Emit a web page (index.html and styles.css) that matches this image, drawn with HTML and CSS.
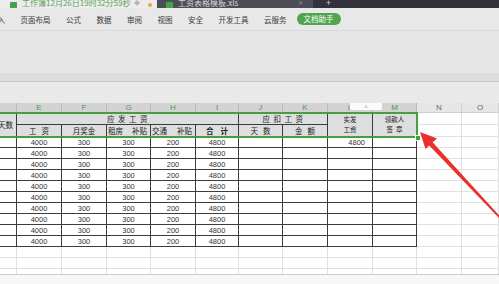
FILE: index.html
```html
<!DOCTYPE html>
<html>
<head>
  <title>工资表</title>
  <link rel="stylesheet" href="styles.css">
</head>
<body>

  <div class="tabbar">
    <div class="tab tab-active">
      <span class="doc-icon"></span>
      <span class="tab-title">工作簿12月26日19时32分59秒</span>
      <span class="tab-pin">◆</span>
      <span class="tab-dot"></span>
    </div>
    <div class="tab tab-dark">
      <span class="doc-icon"></span>
      <span class="tab-title tab-title-light">工资表格模板.xls</span>
      <span class="tab-close">✕</span>
    </div>
    <div class="tab-rest"><span class="tab-plus">+</span></div>
  </div>

  <div class="menu">
    <span class="menu-item menu-first">入</span>
    <span class="menu-item">页面布局</span>
    <span class="menu-item">公式</span>
    <span class="menu-item">数据</span>
    <span class="menu-item">审阅</span>
    <span class="menu-item">视图</span>
    <span class="menu-item">安全</span>
    <span class="menu-item">开发工具</span>
    <span class="menu-item">云服务</span>
    <span class="menu-pill">文档助手</span>
  </div>

  <div class="ribbon"></div>
  <div class="ribbon-band"></div>
  <div class="formula-area"></div>

  <div class="sheet">
    <div class="colhead">
      <div class="ch ch-sel"></div>
      <div class="ch ch-sel">E</div>
      <div class="ch ch-sel">F</div>
      <div class="ch ch-sel">G</div>
      <div class="ch ch-sel">H</div>
      <div class="ch ch-sel">I</div>
      <div class="ch ch-sel">J</div>
      <div class="ch ch-sel">K</div>
      <div class="ch ch-sel">L</div>
      <div class="ch ch-sel">M</div>
      <div class="ch">N</div>
      <div class="ch">O</div>
      <div class="collapse-btn">^</div>
    </div>

    <div class="grid">
      <!-- header row 1 -->
      <div class="c hd rows2 right">天数</div>
      <div class="c hd span5 spaced">应发工资</div>
      <div class="c hd span2 spaced">应扣工资</div>
      <div class="c hd rows2 two-line"><span>实发</span><span>工资</span></div>
      <div class="c hd rows2 two-line"><span>领款人</span><span>签&nbsp;&nbsp;章</span></div>
      <div class="c lt"></div>
      <div class="c lt"></div>
      <!-- header row 2 -->
      <div class="c hd">工&nbsp;&nbsp;&nbsp;资</div>
      <div class="c hd">月奖金</div>
      <div class="c hd split"><span>租房</span><span>补贴</span></div>
      <div class="c hd split"><span>交通</span><span>补贴</span></div>
      <div class="c hd bold">合&nbsp;&nbsp;&nbsp;&nbsp;计</div>
      <div class="c hd">天&nbsp;&nbsp;&nbsp;数</div>
      <div class="c hd">金&nbsp;&nbsp;&nbsp;额</div>
      <div class="c lt"></div>
      <div class="c lt"></div>

      <!-- data rows -->
      <div class="c"></div><div class="c">4000</div><div class="c">300</div><div class="c">300</div><div class="c">200</div><div class="c">4800</div><div class="c"></div><div class="c"></div><div class="c num-right">4800</div><div class="c"></div><div class="c lt"></div><div class="c lt"></div>
      <div class="c"></div><div class="c">4000</div><div class="c">300</div><div class="c">300</div><div class="c">200</div><div class="c">4800</div><div class="c"></div><div class="c"></div><div class="c"></div><div class="c"></div><div class="c lt"></div><div class="c lt"></div>
      <div class="c"></div><div class="c">4000</div><div class="c">300</div><div class="c">300</div><div class="c">200</div><div class="c">4800</div><div class="c"></div><div class="c"></div><div class="c"></div><div class="c"></div><div class="c lt"></div><div class="c lt"></div>
      <div class="c"></div><div class="c">4000</div><div class="c">300</div><div class="c">300</div><div class="c">200</div><div class="c">4800</div><div class="c"></div><div class="c"></div><div class="c"></div><div class="c"></div><div class="c lt"></div><div class="c lt"></div>
      <div class="c"></div><div class="c">4000</div><div class="c">300</div><div class="c">300</div><div class="c">200</div><div class="c">4800</div><div class="c"></div><div class="c"></div><div class="c"></div><div class="c"></div><div class="c lt"></div><div class="c lt"></div>
      <div class="c"></div><div class="c">4000</div><div class="c">300</div><div class="c">300</div><div class="c">200</div><div class="c">4800</div><div class="c"></div><div class="c"></div><div class="c"></div><div class="c"></div><div class="c lt"></div><div class="c lt"></div>
      <div class="c"></div><div class="c">4000</div><div class="c">300</div><div class="c">300</div><div class="c">200</div><div class="c">4800</div><div class="c"></div><div class="c"></div><div class="c"></div><div class="c"></div><div class="c lt"></div><div class="c lt"></div>
      <div class="c"></div><div class="c">4000</div><div class="c">300</div><div class="c">300</div><div class="c">200</div><div class="c">4800</div><div class="c"></div><div class="c"></div><div class="c"></div><div class="c"></div><div class="c lt"></div><div class="c lt"></div>
      <div class="c"></div><div class="c">4000</div><div class="c">300</div><div class="c">300</div><div class="c">200</div><div class="c">4800</div><div class="c"></div><div class="c"></div><div class="c"></div><div class="c"></div><div class="c lt"></div><div class="c lt"></div>
      <div class="c"></div><div class="c">4000</div><div class="c">300</div><div class="c">300</div><div class="c">200</div><div class="c">4800</div><div class="c"></div><div class="c"></div><div class="c"></div><div class="c"></div><div class="c lt"></div><div class="c lt"></div>

      <!-- empty rows -->
      <div class="c lt"></div><div class="c lt"></div><div class="c lt"></div><div class="c lt"></div><div class="c lt"></div><div class="c lt"></div><div class="c lt"></div><div class="c lt"></div><div class="c lt"></div><div class="c lt"></div><div class="c lt"></div><div class="c lt"></div>
      <div class="c lt"></div><div class="c lt"></div><div class="c lt"></div><div class="c lt"></div><div class="c lt"></div><div class="c lt"></div><div class="c lt"></div><div class="c lt"></div><div class="c lt"></div><div class="c lt"></div><div class="c lt"></div><div class="c lt"></div>
      <div class="c lt"></div><div class="c lt"></div><div class="c lt"></div><div class="c lt"></div><div class="c lt"></div><div class="c lt"></div><div class="c lt"></div><div class="c lt"></div><div class="c lt"></div><div class="c lt"></div><div class="c lt"></div><div class="c lt"></div>
    </div>

    <div class="selection"></div>
    <div class="sel-handle"></div>
  </div>

  <div class="statusbar"></div>

  <svg class="arrow" width="499" height="284" viewBox="0 0 499 284">
    <polygon points="420,132 437,138.5 432.6,142.3 500.5,217 499.5,218.5 429.2,145.6 425.5,149" fill="#e8302c"/>
  </svg>

</body>
</html>
```

FILE: styles.css
```css
body {
  margin: 0;
  width: 499px;
  height: 284px;
  overflow: hidden;
  position: relative;
  background: #e7e7e7;
  font-family: "Noto Sans CJK SC", sans-serif;
}

/* title tabs */
.tabbar {
  display: flex;
  height: 8px;
  overflow: hidden;
}

.tab {
  display: flex;
  align-items: flex-end;
  overflow: hidden;
  font-size: 8px;
  line-height: 11px;
}

.tab-active {
  width: 157px;
  background: #ececec;
}

.tab-dark {
  width: 156px;
  background: #4d4d58;
}

.tab-rest {
  flex: 1;
  display: flex;
  align-items: flex-end;
  background: #32323d;
  font-size: 9px;
  line-height: 10px;
  color: #cfcfcf;
}

.tab-plus {
  margin-left: 13px;
}

.doc-icon {
  width: 7px;
  height: 8px;
  margin: 0 5px -2px 10px;
  background: #46a24a;
  border-radius: 1px;
  flex: none;
}

.tab-dark .doc-icon {
  margin-left: 9px;
}

.tab-title {
  color: #5aa55a;
  white-space: nowrap;
  width: 108px;
}

.tab-title-light {
  color: #d8d8dc;
  width: 110px;
}

.tab-pin {
  color: #b5b5b5;
  font-size: 6px;
  margin-left: 4px;
}

.tab-dot {
  width: 4px;
  height: 4px;
  margin: 0 0 1px 8px;
  border-radius: 50%;
  background: #f0a040;
}

.tab-close {
  color: #8a8a93;
  font-size: 6px;
  margin-left: 10px;
}

/* menu */
.menu {
  display: flex;
  align-items: center;
  gap: 15.5px;
  height: 22px;
  margin-left: -2.5px;
  background: #e8e8e8;
  border-bottom: 1px solid #d8d8d8;
  font-size: 7.5px;
  color: #3a3a3a;
}

.menu-item {
  white-space: nowrap;
}

.menu-pill {
  margin-left: -5.5px;
  height: 12px;
  line-height: 12px;
  padding: 0 7px;
  border-radius: 6px;
  background: #4fa64c;
  color: #ffffff;
}

.ribbon {
  height: 42px;
  background: #e6e6e6;
}

.ribbon-band {
  height: 8px;
  background: #dddddd;
  border-bottom: 1px solid #c6c6c6;
}

.formula-area {
  height: 21px;
  background: #e9e9e9;
}

/* sheet */
.sheet {
  position: relative;
  height: 171px;
  overflow: hidden;
  background: #ffffff;
}

.colhead,
.grid {
  display: grid;
  grid-template-columns: 17px 45px 45px 44px 45px 43px 44px 45px 45px 44px 45px 37px;
}

.colhead {
  position: relative;
  height: 10px;
}

.ch {
  box-sizing: border-box;
  height: 10px;
  line-height: 10px;
  text-align: center;
  font-family: "Liberation Sans", sans-serif;
  font-size: 8px;
  color: #666666;
  background: #e6e6e6;
  border-right: 1px solid #cfcfcf;
  border-bottom: 1px solid #cfcfcf;
}

.ch-sel {
  color: #4c9c4c;
  background: #d3d3d3;
  border-right-color: #bababa;
}

.collapse-btn {
  position: absolute;
  left: 350px;
  top: 0;
  width: 32px;
  height: 7px;
  background: #fafafa;
  color: #888888;
  font-family: "Liberation Sans", sans-serif;
  font-size: 7px;
  line-height: 9px;
  text-align: center;
}

.grid {
  grid-template-rows: 12px 12px;
  grid-auto-rows: 11px;
}

.c {
  box-sizing: border-box;
  display: flex;
  align-items: center;
  justify-content: center;
  border-right: 1px solid #3c3c3c;
  border-bottom: 1px solid #3c3c3c;
  font-family: "Liberation Sans", "Noto Sans CJK SC", sans-serif;
  font-size: 7.5px;
  color: #333333;
  white-space: nowrap;
  overflow: hidden;
}

.lt {
  border-right-color: #e0e0e0;
  border-bottom-color: #e0e0e0;
}

.hd {
  background: #dedede;
  color: #222222;
  font-family: "Noto Sans CJK SC", sans-serif;
}

.rows2 {
  grid-row: span 2;
}

.span5 {
  grid-column: span 5;
}

.span2 {
  grid-column: span 2;
}

.spaced {
  letter-spacing: 3.5px;
  padding-left: 3px;
}

.right {
  justify-content: flex-end;
  padding-right: 3px;
}

.two-line {
  flex-direction: column;
  font-size: 6.5px;
  line-height: 9.5px;
  text-align: center;
}

.two-line span {
  display: block;
  height: 9.5px;
}

.split {
  justify-content: space-between;
  padding: 0 3px 0 1px;
}

.bold {
  font-weight: bold;
}

.num-right {
  justify-content: flex-end;
  padding-right: 7px;
}

.selection {
  position: absolute;
  left: -3px;
  top: 9px;
  width: 421px;
  height: 26px;
  box-sizing: border-box;
  border: 2px solid #449e44;
}

.sel-handle {
  position: absolute;
  left: 415px;
  top: 32px;
  width: 4px;
  height: 4px;
  background: #449e44;
  border: 1px solid #ffffff;
}

.statusbar {
  height: 10px;
  box-sizing: border-box;
  border-top: 1px solid #cccccc;
  background: #f7f7f7;
}

.arrow {
  position: absolute;
  left: 0;
  top: 0;
}
```
